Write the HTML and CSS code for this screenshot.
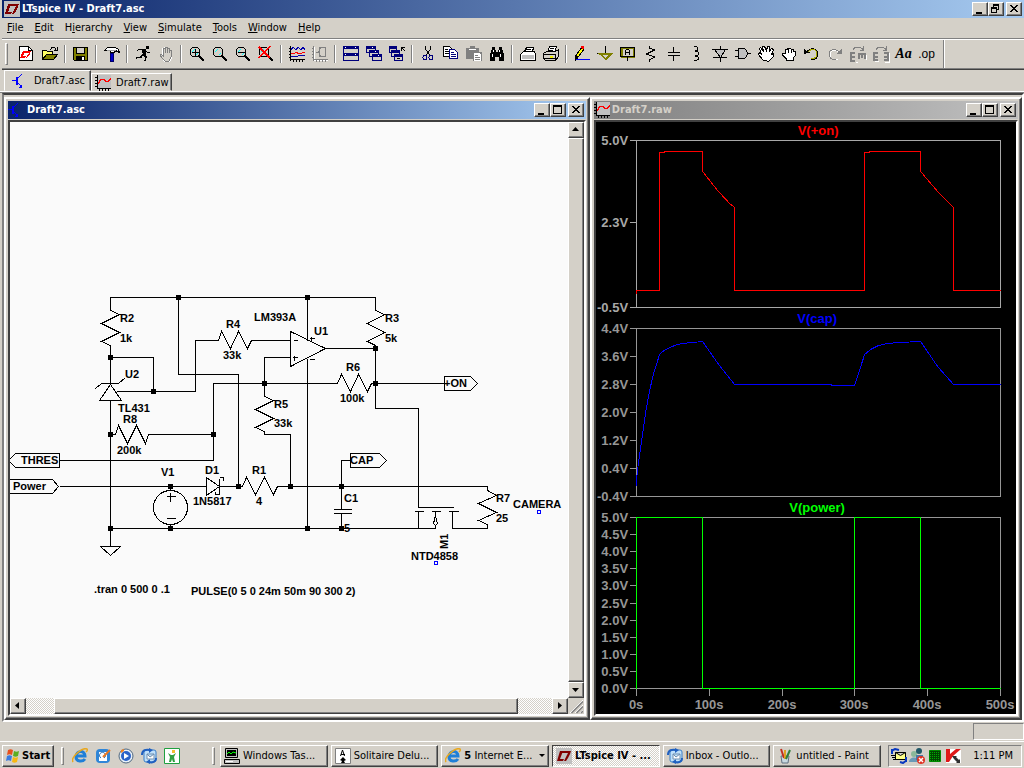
FILE: index.html
```html
<!DOCTYPE html>
<html lang="en">
<head>
<meta charset="utf-8">
<title>LTspice IV - Draft7.asc</title>
<link rel="stylesheet" href="styles.css">
</head>
<body>
<svg class="defs" width="0" height="0" aria-hidden="true">
  <symbol id="lt" viewBox="0 0 16 16"><path fill="#c0c0c0" d="M0 0h16v16H0z"/><path fill="#800000" d="M4 3h3L4 11h4l-1 2H1zM6 3h9l-1 3-2 4-2 3H8l3-6 1-2H5z"/></symbol>
  <symbol id="bjt" viewBox="0 0 16 16"><path fill="none" stroke="#00f" stroke-width="2" d="M5 4v8"/><path fill="none" stroke="#00f" d="M0 7.500h5M5 6l5-5M5 9l5 5"/><path fill="#00f" d="M10 11v4H7z"/></symbol>
  <symbol id="wave" viewBox="0 0 16 16"><path fill="#c0c0c0" d="M2 0h14v14H2z"/><path stroke="#000" d="M2.500 0v14M0 2.500h2M0 5.500h2M0 8.500h2M0 11.500h2M2 13.500h14M4.500 14v2M7.500 14v2M10.500 14v2M13.500 14v2"/><path fill="none" stroke="#f00" stroke-width="1.500" d="M3 8.500l3-4h3l2 2h2l3-3"/></symbol>
  <symbol id="min" viewBox="0 0 12 10"><path fill="#000" d="M2 8h6v2H2z"/></symbol>
  <symbol id="max" viewBox="0 0 12 10"><path fill="#000" fill-rule="evenodd" d="M1 0h9v9H1zM2 2v6h7V2z"/></symbol>
  <symbol id="res" viewBox="0 0 12 10"><path fill="#000" fill-rule="evenodd" d="M3 0h6v6H7V5h1V2H4v1H3zM1 3h6v6H1zM2 5v3h4V5z"/></symbol>
  <symbol id="cls" viewBox="0 0 12 10"><path fill="#000" d="M2 1h2v1h1v1h2V2h1V1h2v1H9v1H8v1H7v1h1v1h1v1h1v1H8V7H7V6H5v1H4v1H2V7h1V6h1V5h1V4H4V3H3V2H2z"/></symbol>
  <symbol id="lens" viewBox="0 0 16 16"><circle cx="6" cy="6" r="5" fill="#d4d0c8" stroke="#000"/><path stroke="#0ff" fill="none" d="M3 6l3-3M7 9l2-2"/><path stroke="#000" stroke-width="2" d="M10 10l5 5"/></symbol>
  <symbol id="ie" viewBox="0 0 16 16"><path fill="none" stroke="#1f7fd8" stroke-width="3" d="M4 8h9c0-6-9-6-9 1 0 5 7 5 9 2"/><path fill="none" stroke="#e8a820" stroke-width="1.500" d="M1 14C-2 9 11-1 15 1c1 1 0 2-1 3"/></symbol>
  <symbol id="mail" viewBox="0 0 16 16"><rect x="3" y="2" width="12" height="12" rx="2" fill="#bfe0fa" stroke="#3a7fc8"/><path fill="none" stroke="#2060c0" stroke-width="2" d="M1 7c0-5 4-6 8-5M15 10c0 4-4 5-7 4"/><path fill="#2060c0" d="M8 0l4 2-4 3zM9 11v5l-4-2z"/><path fill="#fff" stroke="#7090b0" d="M6 6h7v5H6zl3 3 4-3"/></symbol>
</svg>
<div class="app">
  <header class="titlebar active">
    <svg class="ico" aria-hidden="true"><use href="#lt"/></svg>
    <h1 class="caption">LTspice IV - Draft7.asc</h1>
    <div class="winbtns"><button aria-label="Minimize"><svg><use href="#min"/></svg></button><button aria-label="Restore"><svg><use href="#res"/></svg></button><button class="close" aria-label="Close"><svg><use href="#cls"/></svg></button></div>
  </header>
  <nav class="menu">
    <button><u>F</u>ile</button><button><u>E</u>dit</button><button>H<u>i</u>erarchy</button><button><u>V</u>iew</button><button><u>S</u>imulate</button><button><u>T</u>ools</button><button><u>W</u>indow</button><button><u>H</u>elp</button>
  </nav>
  <div class="toolbar" role="toolbar" aria-label="Main">
    <i class="grip"></i>
    <button aria-label="New schematic"><svg viewBox="0 0 16 16"><path fill="#fff" stroke="#000" d="M.5.500h9l4 4v10H.5z"/><path fill="none" stroke="#000" d="M9.500.500v4h4"/><path fill="#f00" d="M4 5h2l-2 5h3l-1 2H1zM6 5h6l-1 3-3 4H7l2-4 1-1H5z"/></svg></button>
    <button aria-label="Open"><svg viewBox="0 0 16 16"><path fill="#ff6" stroke="#000" d="M.5 13.500v-9h4l1 1h5v3"/><path fill="#808000" stroke="#000" d="M.5 13.500l4-5h11l-4 5z"/><path fill="none" stroke="#000" d="M9 3.500c0-3 4-3 5 0M15 1v3h-3"/></svg></button>
    <i class="sep"></i>
    <button aria-label="Save"><svg viewBox="0 0 16 16"><path fill="#808000" stroke="#000" d="M.5 1.500h14v13H1.500l-1-1z"/><path fill="#d4d0c8" stroke="#000" d="M3.500 1.500h8v6h-8z"/><path d="M3 10h9v5H3z"/><path fill="#fff" d="M9 11h2v3H9z"/></svg></button>
    <i class="sep"></i>
    <button aria-label="Control panel"><svg viewBox="0 0 16 16"><path fill="#fff" stroke="#000" d="M.5 4.500l3-3h8l3 2 1 3-4-2-1 2h-4v-2h-4z"/><path fill="#a0a0a0" d="M3 4h9v1H3z"/><path fill="#00c" stroke="#006" d="M6.500 7.500h3v8h-3z"/></svg></button>
    <i class="sep"></i>
    <button aria-label="Run"><svg viewBox="0 0 16 16"><path d="M11 0h3v3h-3zM7 4h4v5H8z"/><path fill="none" stroke="#000" d="M10.500 4L4 3 2 5M10 4l3 3 2-1"/><path fill="none" stroke="#000" stroke-width="1.500" d="M9 7l-3 4-5 1M8 8l3 3-1 4"/></svg></button>
    <button aria-label="Halt" disabled><svg viewBox="0 0 16 16"><path fill="#fff" d="M2 8h2V2h2V1h2v1h4v3h2v7l-2 4H6z"/><path fill="#d4d0c8" stroke="#808080" d="M6 14L2 9.500V8h1l2 2V2.500h2V7 1.500h2V7 2.500h2V7 4.500h2V11l-2 4H7z"/></svg></button>
    <i class="sep"></i>
    <button aria-label="Zoom in"><svg viewBox="0 0 16 16"><use href="#lens"/><path stroke="#000" fill="none" d="M3 6.500h7M6.500 3v7"/></svg></button>
    <button aria-label="Pan"><svg viewBox="0 0 16 16"><use href="#lens"/></svg></button>
    <button aria-label="Zoom out"><svg viewBox="0 0 16 16"><use href="#lens"/><path stroke="#000" fill="none" d="M3 6.500h7"/></svg></button>
    <button aria-label="Zoom full extents"><svg viewBox="0 0 16 16"><use href="#lens"/><path stroke="#f00" stroke-width="1.500" fill="none" d="M1 1l11 11M12 0L1 12"/></svg></button>
    <i class="sep"></i>
    <button aria-label="Autorange"><svg viewBox="0 0 16 16"><path fill="none" stroke="#000" d="M1.500 0v15M0 2.500h2M0 5.500h2M0 8.500h2M0 11.500h2M1 13.500h15M4.500 14v2M7.500 14v2M10.500 14v2M13.500 14v2"/><path fill="none" stroke="#00a" d="M2 4l2-3 3 3 2-3 3 3 2-3 2 3M2 10.500h6l2-1h6"/><path fill="none" stroke="#f00" d="M2 7.500h3l2-1 3 1h2l2-1h2"/></svg></button>
    <button aria-label="Plot settings" disabled><svg viewBox="0 0 16 16"><path fill="none" stroke="#fff" d="M2.500 1v14M2 14.500h14"/><path fill="none" stroke="#808080" d="M1.500 0v15M0 2.500h2M0 5.500h2M0 8.500h2M0 11.500h2M1 13.500h15M4.500 14v2M7.500 14v2M10.500 14v2M13.500 14v2M7.500 1v10M13 1.500H9c-3 3-3 7 0 9h4M13.500 1v10M4 6.500h3"/></svg></button>
    <i class="sep"></i>
    <button aria-label="Tile windows"><svg viewBox="0 0 16 16"><path fill="#d4d0c8" stroke="#00007b" d="M.5.500h15v14H.5zM0 7.500h16"/><path fill="#00007b" d="M0 1h16v2H0zM0 8h16v2H0z"/><path fill="#fff" d="M2 1h1v1H2zM12 1h1v1h-1zM2 8h1v1H2zM12 8h1v1h-1z"/></svg></button>
    <button aria-label="Cascade windows"><svg viewBox="0 0 16 16"><g fill="#d4d0c8" stroke="#00007b"><path d="M.5.500h9v6h-9zM3.500 4.500h9v6h-9zM6.500 8.500h9v6h-9z"/></g><path fill="#00007b" d="M0 0h10v3H0zM3 4h10v3H3zM6 8h10v3H6z"/><path fill="#fff" d="M6 1h1v1H6zM9 5h1v1H9zM12 9h1v1h-1z"/></svg></button>
    <button aria-label="Close all windows"><svg viewBox="0 0 16 16"><g fill="#d4d0c8" stroke="#00007b"><path d="M.5.500h7v6h-7zM2.500 4.500h8v6h-8zM5.500 8.500h8v6h-8z"/></g><path fill="#00007b" d="M0 0h8v3H0zM2 4h9v3H2zM5 8h9v3H5z"/><path fill="none" stroke="#000" d="M12.500 5V1.500H16M13 2l3 3"/><path d="M8 12h3v1H8z"/></svg></button>
    <i class="sep"></i>
    <button aria-label="Cut"><svg viewBox="0 0 16 16"><path fill="none" stroke="#000" d="M5.500 0v3l4 6M10.500 0v3l-4 6"/><circle cx="5" cy="11.500" r="2" fill="none" stroke="#00007b"/><circle cx="11" cy="11.500" r="2" fill="none" stroke="#00007b"/></svg></button>
    <button aria-label="Copy"><svg viewBox="0 0 16 16"><path fill="#fff" stroke="#000" d="M.5.500h6l2 2v8h-8z"/><path fill="none" stroke="#000" d="M2 3.500h3M2 5.500h5M2 7.500h5"/><path fill="#fff" stroke="#00007b" d="M6.500 3.500h5l3 3v6h-8z"/><path fill="none" stroke="#00007b" d="M8 6.500h3M8 8.500h5M8 10.500h5"/></svg></button>
    <button aria-label="Paste" disabled><svg viewBox="0 0 16 16"><path fill="#808080" d="M0 2h4V0h5v2h4v4h3v9H7v-2H0z"/><path fill="#fff" d="M3 3h7v1H3zM8 7h5l2 2v6H8z"/><path fill="#808080" d="M9 9h3v1H9zM9 11h5v1H9zM9 13h5v1H9z"/></svg></button>
    <button aria-label="Find"><svg viewBox="0 0 16 16"><path d="M3 1h3v3h1v2h2V4h1V1h3v3h1v3h1v8h-5v-4H6v4H1V7h1V4h1z"/><path fill="#fff" d="M4 4h1v2H4zM3 8h1v3H3zM10 4h1v2h-1zM11 8h1v3h-1z"/></svg></button>
    <i class="sep"></i>
    <button aria-label="Print setup"><svg viewBox="0 0 16 16"><path fill="#fff" stroke="#000" d="M4.500 5.500l2-4h7l-1 4M.5 8.500l3-3h11l1 3v6H.5z"/><path fill="#c0c0c0" d="M2 9h12v4H2z"/><path stroke="#000" d="M6 3.500h5"/></svg></button>
    <button aria-label="Print"><svg viewBox="0 0 16 16"><path fill="#fff" stroke="#000" d="M4.500 6.500l2-6h7l-2 6"/><path fill="#d4d0c8" stroke="#000" d="M.5 7.500l3-2h9l3-2v7l-3 4H2.500l-2-2z"/><path stroke="#000" d="M7 2.500h4M6 4.500h4M1 8.500h11M1 12.500h11M12.500 8v6"/><path stroke="#ee0" stroke-width="2" d="M7 11h3"/></svg></button>
    <i class="sep"></i>
    <button aria-label="Wire"><svg viewBox="0 0 16 16"><path fill="#ff0" stroke="#000" d="M2 12l1-4 5-7 2 2-5 7z"/><path fill="#f00" d="M7 0h3v3H8z"/><path d="M1 9h2l1 3-3 3z"/><path stroke="#00f" d="M2 13.500h14"/></svg></button>
    <button aria-label="Ground"><svg viewBox="0 0 16 16"><path stroke="#000" d="M8.500 0v8M0 7.500h16"/><path fill="#d4d0c8" stroke="#808000" stroke-width="1.500" d="M3 8h11l-5 5z"/></svg></button>
    <button aria-label="Label net"><svg viewBox="0 0 16 16"><path fill="#d4d0c8" stroke="#808000" stroke-width="2" d="M2 2h12v9H2z"/><path fill="none" stroke="#000" d="M.5 1.500h14v9H.5zM7.500 11v4M5.500 9V5l1-2h2l1 2v4M5 6.500h4"/></svg></button>
    <button aria-label="Resistor"><svg viewBox="0 0 16 16"><path fill="none" stroke="#000" d="M6.500 0v2l5 2-8 4 8 3-5 3v2"/></svg></button>
    <button aria-label="Capacitor"><svg viewBox="0 0 16 16"><path fill="none" stroke="#000" d="M7.500 1v5M2 6.500h12M2 9.500h12M7.500 10v5"/></svg></button>
    <button aria-label="Inductor"><svg viewBox="0 0 16 16"><path fill="none" stroke="#000" d="M5 .5c5 0 5 4 1 4.500 5 0 5 4.500 0 5 5 0 5 4.500-1 4.500"/></svg></button>
    <button aria-label="Diode"><svg viewBox="0 0 16 16"><path fill="#c0c0c0" stroke="#000" d="M2.500 3.500h11l-5 8zM0 3.500h16M1 11.500h14M8.500 0v3M8.500 12v4"/></svg></button>
    <button aria-label="Component"><svg viewBox="0 0 16 16"><path fill="#c0c0c0" stroke="#000" d="M3.500 2.500h5c5 1 5 9 0 10h-5z"/><path stroke="#000" d="M0 4.500h3M0 10.500h3M12 7.500h4"/></svg></button>
    <button aria-label="Move"><svg viewBox="0 0 16 16"><path fill="#fff" stroke="#000" d="M5 14L.5 8.500l1-2 2 2-2-6 1-1 3 4-1-5h2l2 4 1-4h2v5l2-3 2 1-2 5 2-1v3l-5 5z"/></svg></button>
    <button aria-label="Drag"><svg viewBox="0 0 16 16"><path fill="#fff" stroke="#000" d="M5 14.500v-2L1.500 9V7h3V4l2-1 1 1V2.500h2l1 1h2v2h2V9l-2 3v2.500z"/><path stroke="#000" d="M7.500 4v3M10.500 4v3"/></svg></button>
    <button aria-label="Undo"><svg viewBox="0 0 16 16"><path fill="none" stroke="#000" d="M3 6c3-5 11-4 11 2 0 4-3 6-7 5"/><path fill="none" stroke="#aa0" d="M4 6c3-4 9-3 9 2 0 3-2 5-6 4"/><path d="M0 3h1l2 3h3v1H2v1H0z"/></svg></button>
    <button aria-label="Redo" disabled><svg viewBox="0 0 16 16"><path fill="none" stroke="#fff" d="M13 8C10 2 3 4 3 9c0 4 3 6 8 4"/><path fill="none" stroke="#808080" d="M12 6C9 2 2 3 2 8c0 4 3 6 7 5"/><path fill="#808080" d="M15 2v6h-6z"/></svg></button>
    <button aria-label="Rotate" disabled><svg viewBox="0 0 16 16"><path fill="none" stroke="#fff" d="M6 16h2M16 9v5"/><path fill="none" stroke="#808080" stroke-width="2" d="M5 7H1v8h4M1 11h4M8 8h8M9 8v5M12 8v4M15 8v5"/><path fill="none" stroke="#808080" d="M3 4c2-4 8-4 10 0M13.500 0v4H10"/></svg></button>
    <button aria-label="Mirror" disabled><svg viewBox="0 0 16 16"><path fill="none" stroke="#fff" d="M2 15.500h4M16.500 7v9h-5"/><path fill="none" stroke="#808080" stroke-width="2" d="M5 7H1v7h4M1 11h4M11 7h4v7h-4M15 11h-4"/><path fill="none" stroke="#808080" d="M3 4c2-4 8-4 10 0M13.500 0v4H10"/></svg></button>
    <button class="aa" aria-label="Text">Aa</button>
    <button class="op" aria-label="SPICE directive">.op</button>
    <i class="end"></i>
  </div>
  <div class="tabs" role="tablist">
    <button class="tab on" role="tab" aria-selected="true"><svg class="ico"><use href="#bjt"/></svg>Draft7.asc</button>
    <button class="tab" role="tab" aria-selected="false"><svg class="ico"><use href="#wave"/></svg>Draft7.raw</button>
  </div>
  <main class="mdi">
    <section class="win schematic">
      <div class="titlebar active"><svg class="ico"><use href="#bjt"/></svg><h2 class="caption">Draft7.asc</h2>
        <div class="winbtns"><button aria-label="Minimize"><svg><use href="#min"/></svg></button><button aria-label="Maximize"><svg><use href="#max"/></svg></button><button class="close" aria-label="Close"><svg><use href="#cls"/></svg></button></div>
      </div>
      <div class="client scrolled">
        <div class="sheet">
        <svg class="circuit" width="559" height="575" viewBox="10 122 559 575">
          <g transform="translate(.5 .5)" fill="none" stroke="#000" shape-rendering="crispEdges">
            <path d="M110 310V297H375V310M178 297V374H238V486M307 297V340M307 358V528"/>
            <path d="M110 310l9 4-18 9 18 9-18 9 9 4v38M375 310l9 4-17 9 17 9-17 9 8 4v63h43v99h35"/>
            <path d="M110 357H153V391M95 388l6-5h17l7-6M110 384l-11 16h22zM116 391H195V340H218M110 400V546M110 434h5"/>
            <path d="M218 340l3-9 9 17 8-17 9 17 4-8H290M290 331v35l35-18zM325 348h50M293 340h4M292 357h5M294 355v5M309 338h5M311 336v5M309 359h5"/>
            <path d="M290 357H264V396l9 4-18 9 18 9-18 9 9 4v3h26v52M213 460V383H337l4-9 9 17 8-17 9 17 4-8H444"/>
            <path d="M115 434l3-9 9 18 9-18 9 18 3-9h65M59 460H213M59 486H206M206 477v18l13-9zM219 478v16M219 477h4v3M219 494h-4v-3M219 486h23l4-9 9 17 9-17 9 17 4-8H487V490l9 5-18 8 18 9-18 8 9 4v4H452V511"/>
            <path d="M59 453v14H15l-7-7 7-7zM9 479h43l6 7-6 7H9M350 453h29l7 7-7 7h-29zM444 376h26l7 7-7 7h-26z"/>
            <path d="M341 486V460h9M341 486v23M333 509h18M333 513h18M341 513v15M110 528H435V524M414 511h9M431 511h9M448 511h10M418 511v17M435 511v4l-2 8 2 2 2-2-2-8"/>
            <circle cx="170" cy="507" r="17"/><path d="M170 486v4M170 524v4M166 496h9M170 492v9M166 518h9M100 546h20l-10 9z"/>
            <path stroke="#00f" d="M537 510h3v3h-3zM434 561h3v3h-3z"/>
          </g>
          <path d="M176 295h5v5h-5zM305 295h5v5h-5zM108 355h5v5h-5zM151 389h5v5h-5zM108 432h5v5h-5zM211 432h5v5h-5zM262 381h5v5h-5zM373 381h5v5h-5zM373 346h5v5h-5zM168 484h5v5h-5zM236 484h5v5h-5zM288 484h5v5h-5zM339 484h5v5h-5zM108 526h5v5h-5zM168 526h5v5h-5zM305 526h5v5h-5zM339 526h5v5h-5z"/>
          <g class="part">
            <text x="120" y="322">R2</text><text x="120" y="342">1k</text><text x="125" y="378">U2</text><text x="118" y="412">TL431</text><text x="123" y="423">R8</text><text x="117" y="454">200k</text>
            <text x="226" y="328">R4</text><text x="223" y="359">33k</text><text x="254" y="321">LM393A</text><text x="314" y="335">U1</text><text x="385" y="322">R3</text><text x="385" y="342">5k</text>
            <text x="346" y="371">R6</text><text x="340" y="402">100k</text><text x="274" y="408">R5</text><text x="274" y="427">33k</text><text x="444" y="387">+ON</text>
            <text x="21" y="464">THRES</text><text x="13" y="490">Power</text><text x="161" y="476">V1</text><text x="205" y="474">D1</text><text x="193" y="505">1N5817</text><text x="252" y="474">R1</text><text x="256" y="505">4</text>
            <text x="350" y="464">CAP</text><text x="344" y="502">C1</text><text x="344" y="532">5</text><text x="496" y="502">R7</text><text x="496" y="522">25</text><text x="513" y="508">CAMERA</text><text transform="translate(448 549) rotate(-90)">M1</text><text x="411" y="560">NTD4858</text>
            <text x="94" y="593">.tran 0 500 0 .1</text><text x="191" y="595">PULSE(0 5 0 24m 50m 90 300 2)</text>
          </g>
        </svg>
        </div>
        <div class="vbar"><button aria-label="Scroll up"><svg viewBox="0 0 12 12"><path d="M2 7h7L5.500 3z"/></svg></button><span class="thumb"></span><button aria-label="Scroll down"><svg viewBox="0 0 12 12"><path d="M2 4h7L5.500 8z"/></svg></button></div>
        <div class="hbar"><button aria-label="Scroll left"><svg viewBox="0 0 12 12"><path d="M7 2v7L3 5.500z"/></svg></button><span class="track"><span class="thumb"></span></span><button aria-label="Scroll right"><svg viewBox="0 0 12 12"><path d="M4 2v7l4-3.500z"/></svg></button></div>
        <svg class="sizer" viewBox="0 0 15 16"><path stroke="#fff" d="M2 15L15 2M7 15l8-8M12 15l3-3"/><path stroke="#808080" stroke-width="1.500" d="M3.500 15L15 3.500M8.500 15L15 8.500M13 15l2-2"/></svg>
      </div>
    </section>
    <section class="win waves">
      <div class="titlebar idle"><svg class="ico"><use href="#wave"/></svg><h2 class="caption">Draft7.raw</h2>
        <div class="winbtns"><button aria-label="Minimize"><svg><use href="#min"/></svg></button><button aria-label="Maximize"><svg><use href="#max"/></svg></button><button class="close" aria-label="Close"><svg><use href="#cls"/></svg></button></div>
      </div>
      <div class="client black">
        <svg class="plots" viewBox="596 122 420 592">
          <g transform="translate(.5 .5)" fill="none" stroke="#969696" shape-rendering="crispEdges">
            <path stroke="#a8a8a8" d="M636 140H1000V307H636zM629 140h7M629 222h7M629 307h7"/>
            <path d="M636 328H1000V496H636zM629 328h7M629 356h7M629 384h7M629 412h7M629 440h7M629 468h7M629 496h7"/>
            <path d="M636 517H1000V688H636zM629 517h7M629 534h7M629 551h7M629 568h7M629 585h7M629 603h7M629 620h7M629 637h7M629 654h7M629 671h7M629 688h7M636 688v7M709 688v7M782 688v7M854 688v7M927 688v7M1000 688v7"/>
            <path stroke="#f00" d="M636 293V290H659V152H664V151H702V171L717 190 729 203 734 207V290H864V152H869V151H920V171L937 191 953 207V290H1000"/>
            <path stroke="#00f" d="M636 485V478L638 461 641 440 645 412 649 390 653 373 659 354 662 351 667 348 674 345 681 343 692 342 702 341 718 364 734 384H831V385H854L864 354 870 349 878 345 887 343 898 342 920 341 937 366 953 384H1000"/>
            <path stroke="#0f0" d="M636 688V517H702V688H854V517H920V688H1000"/>
          </g>
          <g class="trace"><text fill="#f00" x="818" y="135">V(+on)</text><text fill="#00f" x="817" y="323">V(cap)</text><text fill="#0f0" x="817" y="512">V(power)</text></g>
          <g class="ylab bright"><text x="628" y="145">5.0V</text><text x="628" y="227">2.3V</text><text x="628" y="312">-0.5V</text></g>
          <g class="ylab"><text x="628" y="333">4.4V</text><text x="628" y="361">3.6V</text><text x="628" y="389">2.8V</text><text x="628" y="417">2.0V</text><text x="628" y="445">1.2V</text><text x="628" y="473">0.4V</text><text x="628" y="501">-0.4V</text>
            <text x="628" y="522">5.0V</text><text x="628" y="539">4.5V</text><text x="628" y="556">4.0V</text><text x="628" y="573">3.5V</text><text x="628" y="590">3.0V</text><text x="628" y="608">2.5V</text><text x="628" y="625">2.0V</text><text x="628" y="642">1.5V</text><text x="628" y="659">1.0V</text><text x="628" y="676">0.5V</text><text x="628" y="693">0.0V</text></g>
          <g class="xlab"><text x="636" y="709">0s</text><text x="709" y="709">100s</text><text x="782" y="709">200s</text><text x="854" y="709">300s</text><text x="927" y="709">400s</text><text x="1000" y="709">500s</text></g>
        </svg>
      </div>
    </section>
  </main>
  <div class="status"><span class="cell"></span></div>
  <footer class="taskbar">
    <button class="start"><svg viewBox="0 0 16 16"><path fill="#e8501c" d="M3 2c2-1 3-1 5 0L7 7C5 6 4 6 2 7z"/><path fill="#5cae20" d="M9 3c2 1 3 1 5 0l-1 5c-2 1-3 1-5 0z"/><path fill="#3a7be0" d="M2 8c2-1 3-1 5 0l-1 5c-2-1-3-1-5 0z"/><path fill="#f8b810" d="M8 9c2 1 3 1 5 0l-1 5c-2 1-3 1-5 0z"/></svg>Start</button>
    <i class="grip"></i>
    <div class="quick">
      <a href="#ie" aria-label="Internet Explorer"><svg><use href="#ie"/></svg></a>
      <a href="#desk" aria-label="Show desktop"><svg viewBox="0 0 16 16"><rect x="1" y="1" width="14" height="14" rx="4" fill="#2f86d8"/><path fill="#fff" d="M4 4h8v9H4z"/><path fill="none" stroke="#2f6fb0" d="M6 10a3 3 0 1 1 3 0"/><path stroke="#e87820" stroke-width="2" d="M8 9l7-7"/></svg></a>
      <a href="#media" aria-label="Media Player"><svg viewBox="0 0 16 16"><circle cx="8" cy="8" r="7" fill="#e8f0f8" stroke="#506880"/><circle cx="8" cy="8" r="5" fill="#2a62c8"/><path fill="#fff" d="M6 5l5 3-5 3z"/><path fill="#f08020" d="M3 2l3-1v2L3 5z"/></svg></a>
      <a href="#mail" aria-label="Outlook"><svg><use href="#mail"/></svg></a>
      <a href="#app" aria-label="Launcher"><svg viewBox="0 0 16 16"><path fill="#fff" stroke="#20a040" d="M.5.500h15v15H.5z"/><path fill="#f0c030" d="M8 2h3v3H8z"/><path fill="#30a040" d="M4 5l3 2h2l3-2-2 4 1 5H9l-1-3-1 3H5l1-5z"/></svg></a>
    </div>
    <i class="grip"></i>
    <div class="tasks">
      <button><svg viewBox="0 0 16 16"><path fill="#c0c0c0" stroke="#000" d="M1.500.500h12v9h-12zM.5 11.500h15v4H.5z"/><path d="M3 2h9v6H3z"/><path fill="none" stroke="#0f0" d="M3 6l2-2 2 2 2-2 3 1"/><path stroke="#fff" d="M2 13.500h7"/></svg><span>Windows Tas...</span></button>
      <button><svg viewBox="0 0 16 16"><path fill="#fff" stroke="#808080" d="M.5.500h15v15H.5z"/><path fill="none" stroke="#000" d="M5.500 8l2-6 2 6M6 6.500h4"/><path d="M8 9l3 3-2 1 1 2H6l1-2-2-1z"/></svg><span>Solitaire Delu...</span></button>
      <button class="group"><svg><use href="#ie"/></svg><span><b>5</b> Internet E...</span><i class="arrow"></i></button>
      <button class="pressed"><svg><use href="#lt"/></svg><span>LTspice IV - ...</span></button>
      <button><svg><use href="#mail"/></svg><span>Inbox - Outlo...</span></button>
      <button><svg viewBox="0 0 16 16"><path fill="#c8d8e0" stroke="#607080" d="M4 8h8l-1 7H5z"/><path fill="none" stroke="#c03020" stroke-width="2" d="M4 1l3 9"/><path fill="none" stroke="#e0a020" stroke-width="2" d="M8 2v9"/><path fill="none" stroke="#30803a" stroke-width="2" d="M13 2l-4 9"/></svg><span>untitled - Paint</span></button>
    </div>
    <div class="tray">
      <svg viewBox="0 0 16 16"><path fill="#ff8" stroke="#000" d="M4.500 4.500h10v7h-10zl5 3 5-3"/><path fill="none" stroke="#0838c0" stroke-width="2" d="M0 3l4-2 4 1M1 1v5M16 12l-4 3-3-1M15 9v5"/><path stroke="#000" d="M0 7.500h4M1 9.500h4M2 11.500h4"/></svg>
      <svg viewBox="0 0 16 16"><circle cx="5" cy="6" r="3" fill="#8ab89a"/><path fill="#6a9ab8" d="M0 14c0-6 10-6 10 0z"/><circle cx="10" cy="3" r="3" fill="#205868"/><path fill="#4878a8" d="M7 7h7v5H7z"/><circle cx="12" cy="12" r="4" fill="#e03020"/><path stroke="#fff" stroke-width="1.500" d="M10 10l4 4M14 10l-4 4"/></svg>
      <svg viewBox="0 0 16 16"><path fill="#040" stroke="#080" d="M2.500 2.500h11v11h-11z"/><path stroke="#0a0" stroke-dasharray="1 1" d="M3 4.500h10M3 6.500h10M3 8.500h10M3 10.500h10M3 12.500h10"/></svg>
      <svg viewBox="0 0 16 16"><path fill="#fff" d="M1 1h15v14H1z"/><path fill="#e01818" d="M1 1h4v5l6-5h5L8 8l-4 6H1z"/><path fill="#303030" d="M7 8h5l-1 1 3 3 1-1v4h-4l1-1-3-3z"/></svg>
      <time class="clock">1:11 PM</time>
    </div>
  </footer>
</div>
</body>
</html>
```
FILE: styles.css
```css
* { box-sizing: border-box; }
body {
  margin: 0;
  background: #d4d0c8;
  color: #000;
  font: 11px/14px "DejaVu Sans Condensed", "DejaVu Sans", sans-serif;
}
button { font: inherit; color: inherit; background: none; border: 0; padding: 0; margin: 0; }
h1, h2 { margin: 0; font-size: inherit; }
svg { display: block; flex: none; }
.defs { position: absolute; }
.app { height: 100vh; display: flex; flex-direction: column; overflow: hidden; }
.ico { width: 16px; height: 16px; }
.ico, .toolbar svg { shape-rendering: crispEdges; }

.titlebar { display: flex; align-items: center; height: 18px; gap: 2px; flex: none; font-weight: bold; color: #fff; }
.titlebar.active { background: linear-gradient(90deg, #0a246a, #a6caf0); }
.titlebar.idle { background: linear-gradient(90deg, #808080, #c0c0c0); color: #d4d0c8; }
header.titlebar { margin-left: 2px; padding: 0 2px; }
.caption { flex: 1; white-space: nowrap; }
.winbtns { display: flex; }
.winbtns button { width: 16px; height: 14px; padding: 1px; }
.winbtns svg { width: 12px; height: 10px; }
.winbtns .close { margin-left: 2px; }
.win .titlebar { padding-right: 2px; margin-bottom: 1px; }
.schematic .titlebar { gap: 3px; }

.winbtns button, .thumb, .vbar button, .hbar button, .start, .tasks button {
  background: #d4d0c8;
  border: 1px solid;
  border-color: #fff #404040 #404040 #fff;
  box-shadow: inset -1px -1px #808080;
}

.menu { display: flex; gap: 1px; height: 20px; padding-left: 2px; flex: none; }
.menu button { padding: 0 5px; }

.toolbar {
  display: flex; align-items: center; flex: none; height: 32px; padding-left: 3px; margin-left: 2px;
  border-top: 1px solid #808080; border-bottom: 1px solid #404040;
  box-shadow: inset 0 1px #fff, inset 0 -1px #808080;
}
.toolbar button { width: 23px; height: 22px; padding: 3px 4px; }
.toolbar svg { width: 16px; height: 16px; overflow: visible; }
.grip { width: 3px; height: 22px; border: 1px solid; border-color: #fff #808080 #808080 #fff; flex: none; }
.toolbar .grip { margin-right: 7px; }
.sep { width: 2px; height: 18px; margin: 0 3px; border-left: 1px solid #808080; border-right: 1px solid #fff; flex: none; }
.end { width: 2px; height: 28px; margin-left: 5px; border-left: 1px solid #808080; border-right: 1px solid #fff; }
.toolbar .aa { font: italic bold 14px/16px "Liberation Serif", serif; padding: 3px; }
.toolbar .op { font: 12px/16px "Liberation Sans", sans-serif; padding: 3px; }

.tabs { display: flex; align-items: flex-end; flex: none; height: 23px; padding: 1px 0 0 4px; border-bottom: 1px solid #808080; box-shadow: inset 0 -1px #fff; }
.tab {
  display: flex; align-items: center; gap: 5px; height: 18px; margin-bottom: 1px; padding: 2px 2px 0 3px;
  border: 1px solid; border-color: #fff #404040 transparent #fff; box-shadow: inset -1px 0 #808080;
}
.tab.on { gap: 6px; height: 21px; padding: 0 5px 0 7px; }

.mdi { flex: 1; min-height: 0; display: flex; margin-left: 2px; padding: 2px 0 0; border: 2px solid; border-color: #404040 #fff #fff #808080; }
.win {
  display: flex; flex-direction: column; min-width: 0; padding: 2px;
  border: 2px solid; border-color: #fff #404040 #404040 #fff;
  box-shadow: inset -1px -1px #808080;
}
.schematic { flex: 587 1 0; }
.waves { flex: 431 1 0; }
.client { flex: 1; min-height: 0; border: 2px solid; border-color: #404040 #fff #fff #404040; }
.scrolled { display: grid; grid-template: minmax(0, 1fr) 16px / minmax(0, 1fr) 16px; background: #d4d0c8; }
.sheet { background: #fafafa; overflow: hidden; }
.part { font: bold 11px "Liberation Sans", sans-serif; }
.vbar { display: flex; flex-direction: column; }
.hbar { display: flex; }
.vbar button, .hbar button { width: 16px; height: 16px; padding: 1px; flex: none; }
.vbar svg, .hbar svg { width: 12px; height: 12px; }
.vbar .thumb { flex: 1; }
.track {
  flex: 1; display: flex; padding: 0 6% 0 5%;
  background: repeating-conic-gradient(#fff 0 25%, #d4d0c8 0 50%) 0 0 / 2px 2px;
}
.hbar .thumb { flex: 1; }
.sizer { width: 15px; height: 16px; }
.black { background: #000; }
.plots { width: 100%; height: 100%; font: bold 13px "Liberation Sans", sans-serif; fill: #969696; }
.trace, .xlab { text-anchor: middle; }
.ylab { text-anchor: end; }
.bright { fill: #a8a8a8; }

.status { display: flex; justify-content: flex-end; height: 19px; flex: none; padding: 1px 0; }
.cell { width: 51px; border: 1px solid; border-color: #808080 #fff #fff #808080; }

.taskbar { display: flex; align-items: center; flex: none; height: 27px; padding: 2px 2px 1px; border-top: 1px solid #fff; }
.taskbar svg { width: 16px; height: 16px; }
.start { display: flex; align-items: center; gap: 1px; width: 52px; height: 22px; padding: 0 2px; font-weight: bold; }
.taskbar > .grip { height: 18px; margin-left: 7px; }
.quick { display: flex; gap: 7px; padding: 0 25px 0 8px; }
.tasks { flex: 1; display: flex; gap: 3px; min-width: 0; margin: 0 7px 0 5px; }
.tasks button { flex: 1 1 0; min-width: 0; height: 22px; display: flex; align-items: center; gap: 3px; padding: 0 3px; text-align: left; white-space: nowrap; }
.tasks .pressed {
  font-weight: bold; border-color: #404040 #fff #fff #404040; box-shadow: none;
  background: repeating-conic-gradient(#fff 0 25%, #d4d0c8 0 50%) 0 0 / 2px 2px;
}
.arrow { margin-left: auto; border: 3px solid transparent; border-top-color: #000; border-bottom: 0; }
.tray { display: flex; align-items: center; gap: 2px; width: 134px; height: 22px; padding: 0 8px 0 2px; border: 1px solid; border-color: #808080 #fff #fff #808080; }
.clock { margin-left: auto; white-space: nowrap; }
```
